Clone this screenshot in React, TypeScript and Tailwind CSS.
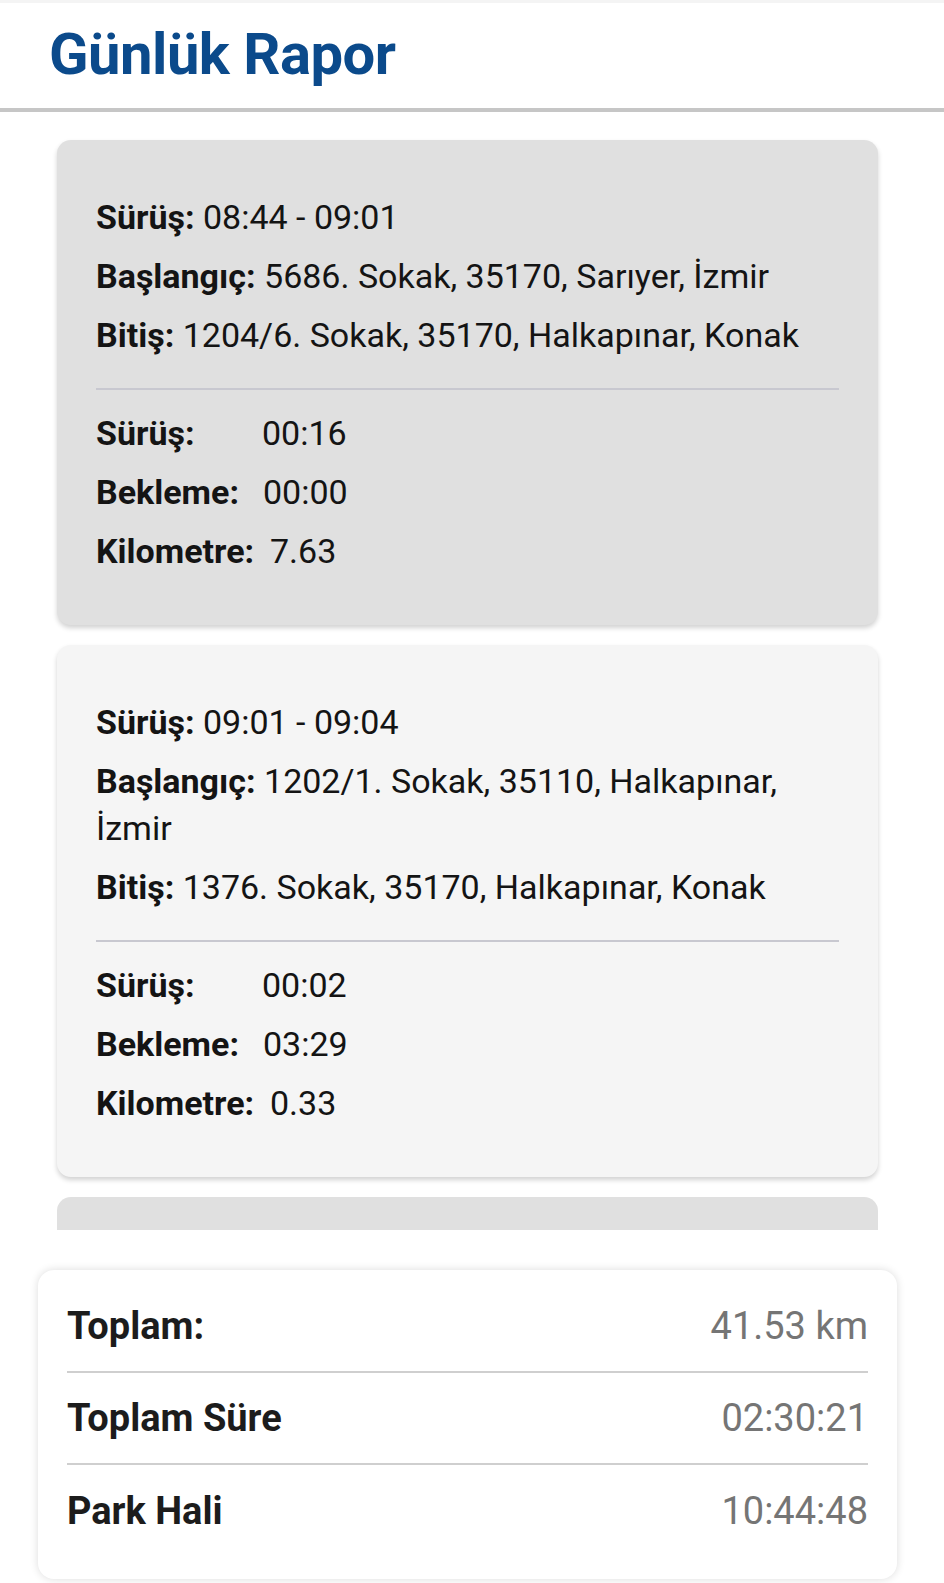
import React from 'react';

type Trip = {
  range: string;
  start: string;
  end: string;
  drive: string;
  wait: string;
  km: string;
  tone: 'dark' | 'light';
};

const trips: Trip[] = [
  {
    range: '08:44 - 09:01',
    start: '5686. Sokak, 35170, Sarıyer, İzmir',
    end: '1204/6. Sokak, 35170, Halkapınar, Konak',
    drive: '00:16',
    wait: '00:00',
    km: '7.63',
    tone: 'dark',
  },
  {
    range: '09:01 - 09:04',
    start: '1202/1. Sokak, 35110, Halkapınar, İzmir',
    end: '1376. Sokak, 35170, Halkapınar, Konak',
    drive: '00:02',
    wait: '03:29',
    km: '0.33',
    tone: 'light',
  },
];

const TripCard: React.FC<{ trip: Trip }> = ({ trip }) => (
  <div
    className={`rounded-[14px] px-[39px] pt-[54px] pb-[50px] shadow-[0_3px_5px_rgba(0,0,0,0.18)] ${
      trip.tone === 'dark' ? 'bg-[#e0e0e0]' : 'bg-[#f5f5f5]'
    }`}
  >
    <div className="space-y-[12px]">
      <p><span className="font-bold">Sürüş:</span> {trip.range}</p>
      <p><span className="font-bold">Başlangıç:</span> {trip.start}</p>
      <p><span className="font-bold">Bitiş:</span> {trip.end}</p>
    </div>
    <div className="mt-[29px] mb-[20px] h-[2px] bg-[#c8c8d0]" />
    <div className="space-y-[12px]">
      <p><span className="inline-block w-[166px] font-bold">Sürüş:</span>{trip.drive}</p>
      <p><span className="inline-block w-[167px] font-bold">Bekleme:</span>{trip.wait}</p>
      <p><span className="inline-block w-[174px] font-bold">Kilometre:</span>{trip.km}</p>
    </div>
  </div>
);

const totals = [
  { label: 'Toplam:', value: '41.53 km' },
  { label: 'Toplam Süre', value: '02:30:21' },
  { label: 'Park Hali', value: '10:44:48' },
];

export default function App() {
  return (
    <div
      className="h-[1583px] overflow-hidden bg-white text-[#141414]"
      style={{ fontFamily: 'Roboto, "Noto Sans", sans-serif' }}
    >
      {/* header */}
      <div className="h-[3px] bg-[#f4f4f4]" />
      <header className="border-b-[4px] border-[#c6c6c6] px-[49px] pt-[18px] pb-[20px]">
        <h1 className="text-[58px] leading-[67px] font-bold tracking-[-0.5px] text-[#0b4a8b]">Günlük Rapor</h1>
      </header>

      {/* trip list */}
      <div className="h-[1118px] overflow-hidden px-[57px] pt-[28px] pr-[66px]">
        <div className="space-y-[20px] text-[34px] leading-[47px]">
          {trips.map((t) => (
            <TripCard key={t.range} trip={t} />
          ))}
          <div className="h-[200px] rounded-[14px] bg-[#e0e0e0]" />
        </div>
      </div>

      {/* totals */}
      <div className="px-[38px] pt-[40px] pr-[47px]">
        <div className="rounded-[16px] bg-white px-[29px] pt-[11px] pb-[22px] shadow-[0_0_8px_rgba(0,0,0,0.14)]">
          {totals.map((row, i) => (
            <div
              key={row.label}
              className={`flex h-[92px] items-center justify-between text-[38px] ${
                i < totals.length - 1 ? 'border-b-[2px] border-[#cfcfcf]' : ''
              }`}
            >
              <span className="font-bold text-[#1c1c1c]">{row.label}</span>
              <span className="text-[#757575]">{row.value}</span>
            </div>
          ))}
        </div>
      </div>
    </div>
  );
}
